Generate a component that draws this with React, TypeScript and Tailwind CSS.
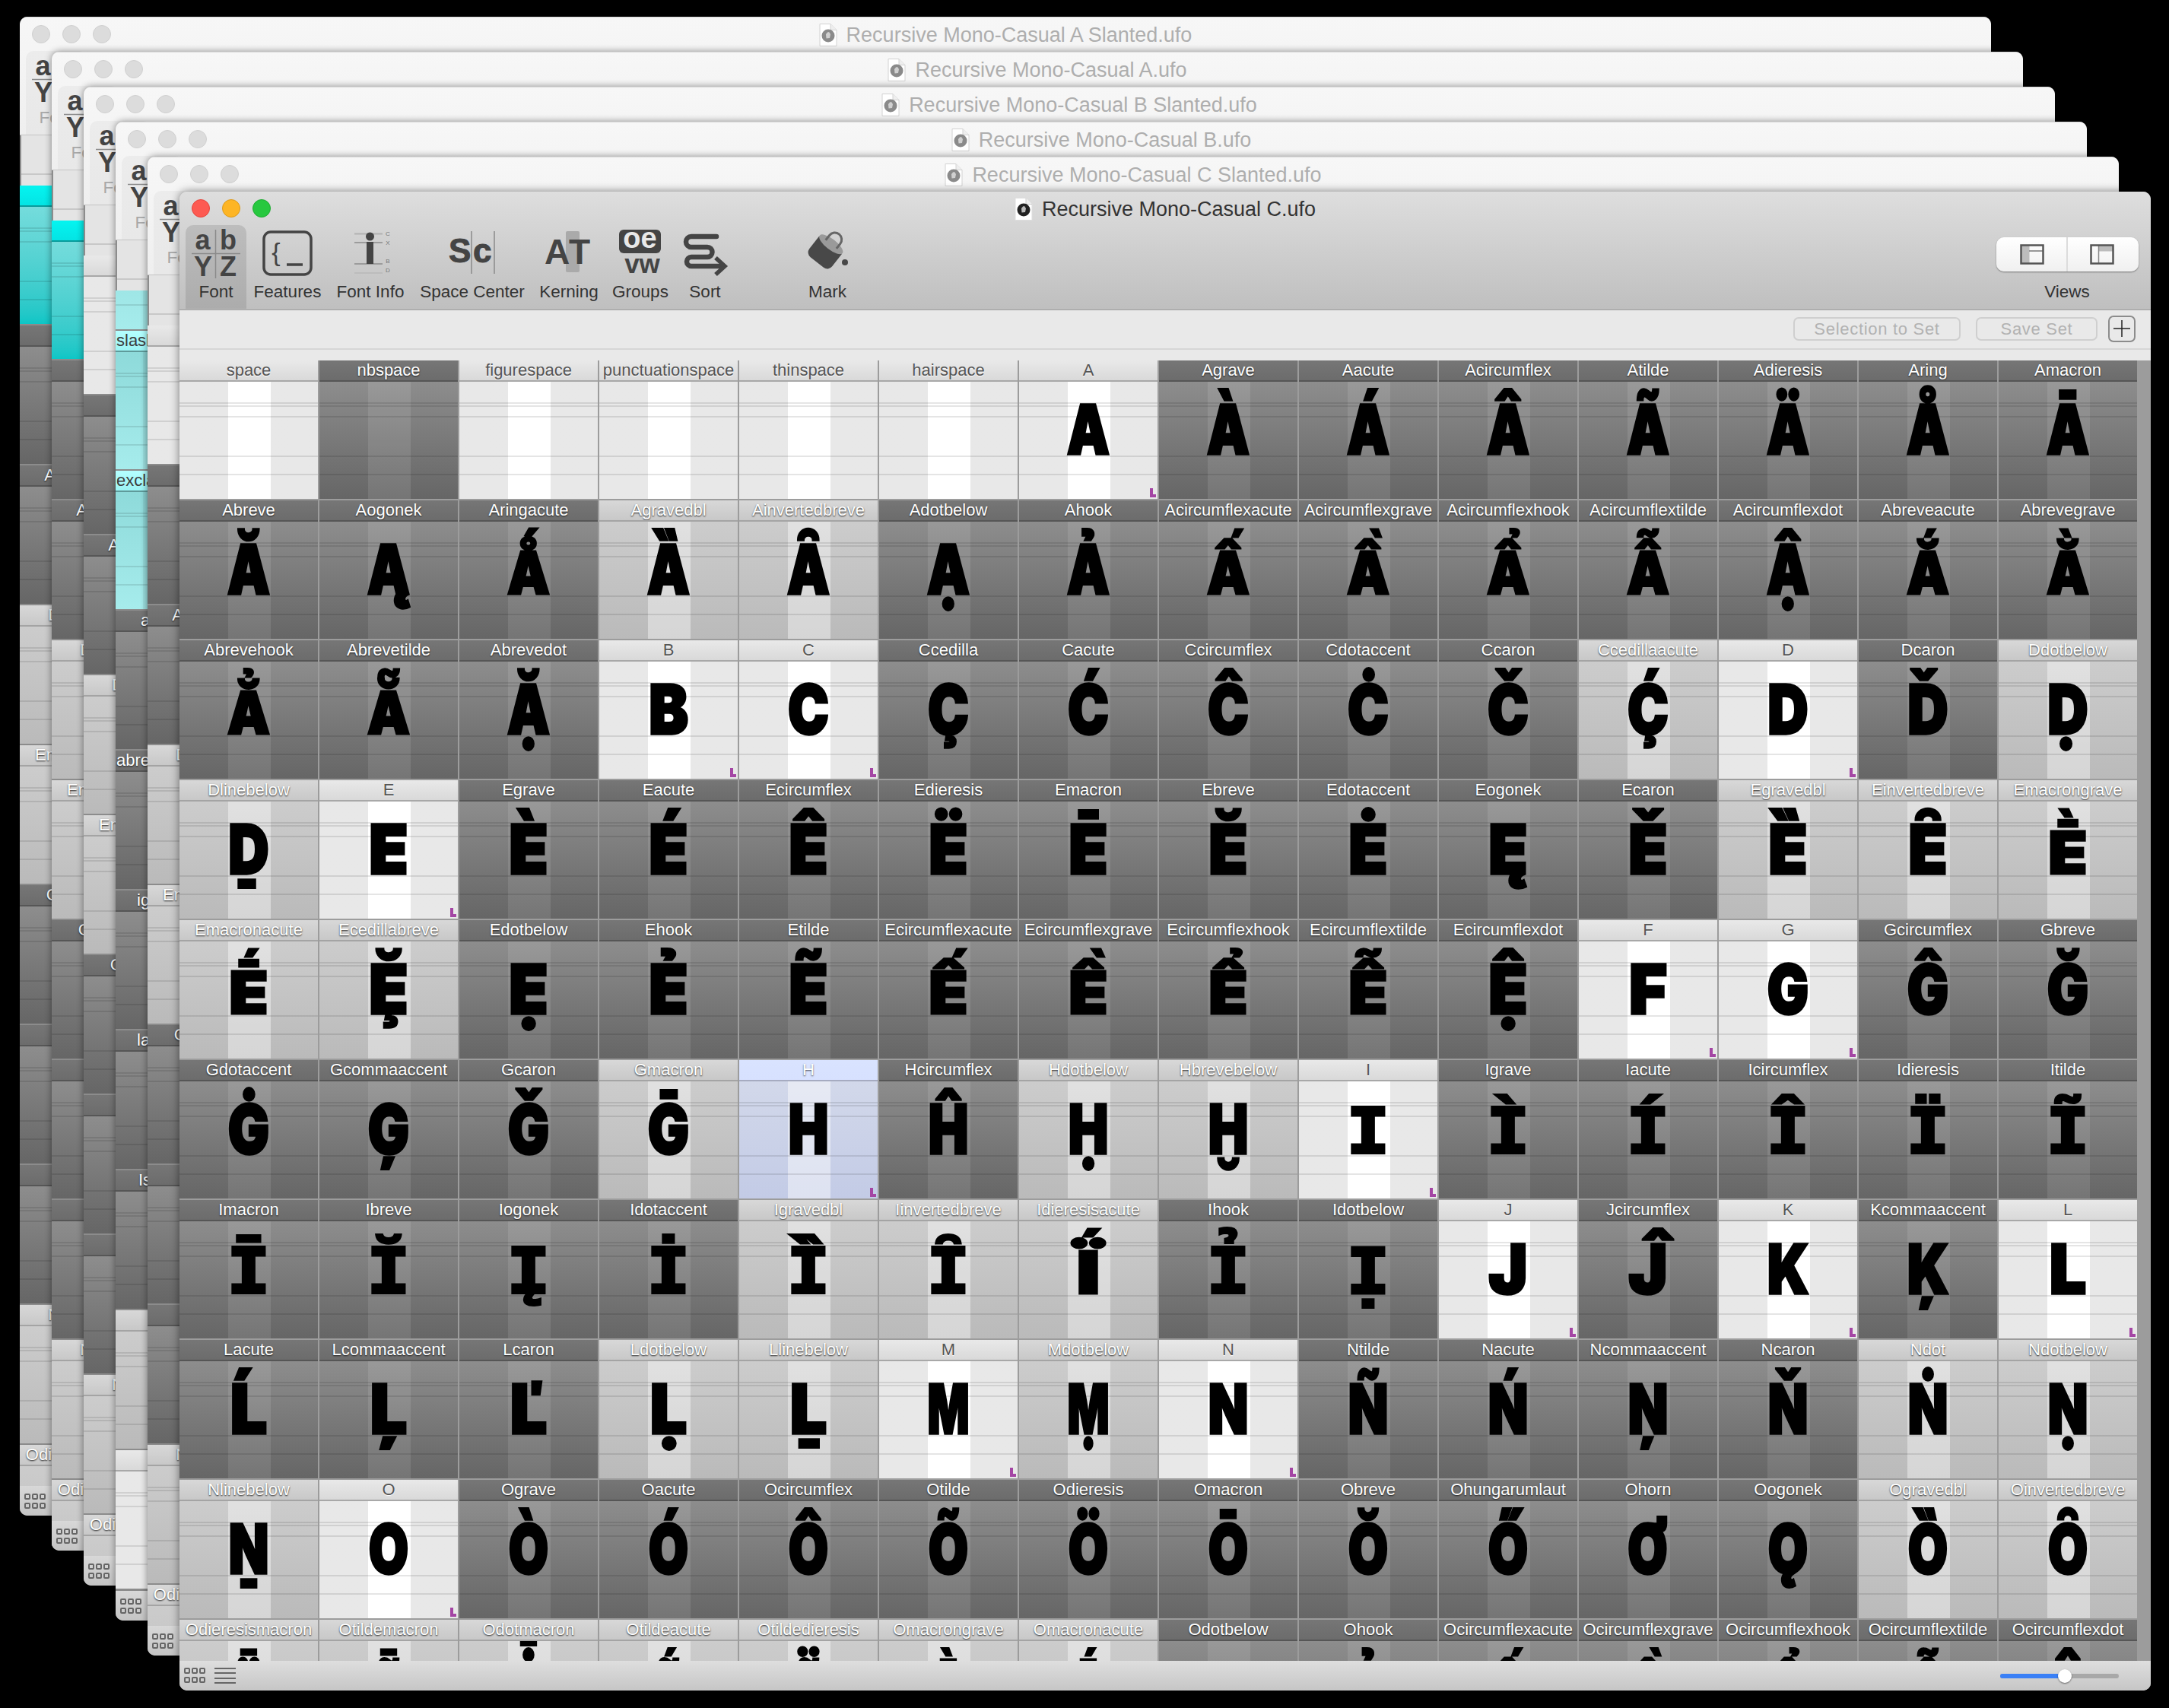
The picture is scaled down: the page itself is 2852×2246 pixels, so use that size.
import React from "react";

type Kind = "W" | "M" | "D" | "L" | "B" | "C" | "P";

type CellData = {
  name: string;
  glyph: string;
  kind: Kind;
  labelLeft?: number;
};

const KINDS: Record<Kind, { head: string; body: string; stripe: string }> = {
  W: {
    head: "from-[#e9e9e9] to-[#d9d9d9] border-[#a8a8a8] text-[#555] [text-shadow:0_1px_1px_#fff]",
    body: "from-[#e8e8e8] to-[#e8e8e8]",
    stripe: "left-[64px] bg-white",
  },
  M: {
    head: "from-[#e9e9e9] to-[#d9d9d9] border-[#a8a8a8] text-[#555] [text-shadow:0_1px_1px_#fff]",
    body: "from-[#e8e8e8] to-[#e8e8e8]",
    stripe: "left-[64px] bg-white",
  },
  D: {
    head: "from-[#767676] to-[#6c6c6c] border-[#565656] text-white [text-shadow:0_1px_2px_rgba(0,0,0,0.75)]",
    body: "from-[#8d8d8d] to-[#666666]",
    stripe: "left-[64px] bg-white/10",
  },
  L: {
    head: "from-[#d8d8d8] to-[#c8c8c8] border-[#a4a4a4] text-white [text-shadow:0_1px_2px_rgba(0,0,0,0.85)]",
    body: "from-[#cccccc] to-[#bababa]",
    stripe: "left-[64px] bg-white/40",
  },
  B: {
    head: "from-[#d9e3ff] to-[#d7e1ff] border-[#a6abc0] text-white [text-shadow:0_1px_2px_rgba(0,0,0,0.7)]",
    body: "from-[#d2d8ea] to-[#c3cbe6]",
    stripe: "left-[64px] bg-white/45",
  },
  C: {
    head: "from-[#05f4f0] to-[#04e4e4] border-[#0a9c9c] text-[#555]",
    body: "from-[#74dcdc] to-[#0cc6c6]",
    stripe: "left-[64px] bg-white/15",
  },
  P: {
    head: "from-[#b4ffff] to-[#9cf4f4] border-[#5f9a9a] text-[#3c3c3c]",
    body: "from-[#8edada] to-[#a6ecec]",
    stripe: "left-[36px] bg-black/5",
  },
};

const SHEET = [
  "space::W nbspace::D figurespace::W punctuationspace::W thinspace::W hairspace::W A:A:M Agrave:À:D Aacute:Á:D Acircumflex:Â:D Atilde:Ã:D Adieresis:Ä:D Aring:Å:D Amacron:Ā:D",
  "Abreve:Ă:D Aogonek:Ą:D Aringacute:Ǻ:D Agravedbl:Ȁ:L Ainvertedbreve:Ȃ:L Adotbelow:Ạ:D Ahook:Ả:D Acircumflexacute:Ấ:D Acircumflexgrave:Ầ:D Acircumflexhook:Ẩ:D Acircumflextilde:Ẫ:D Acircumflexdot:Ậ:D Abreveacute:Ắ:D Abrevegrave:Ằ:D",
  "Abrevehook:Ẳ:D Abrevetilde:Ẵ:D Abrevedot:Ặ:D B:B:M C:C:M Ccedilla:Ç:D Cacute:Ć:D Ccircumflex:Ĉ:D Cdotaccent:Ċ:D Ccaron:Č:D Ccedillaacute:Ḉ:L D:D:M Dcaron:Ď:D Ddotbelow:Ḍ:L",
  "Dlinebelow:Ḏ:L E:E:M Egrave:È:D Eacute:É:D Ecircumflex:Ê:D Edieresis:Ë:D Emacron:Ē:D Ebreve:Ĕ:D Edotaccent:Ė:D Eogonek:Ę:D Ecaron:Ě:D Egravedbl:Ȅ:L Einvertedbreve:Ȇ:L Emacrongrave:Ḕ:L",
  "Emacronacute:Ḗ:L Ecedillabreve:Ḝ:L Edotbelow:Ẹ:D Ehook:Ẻ:D Etilde:Ẽ:D Ecircumflexacute:Ế:D Ecircumflexgrave:Ề:D Ecircumflexhook:Ể:D Ecircumflextilde:Ễ:D Ecircumflexdot:Ệ:D F:F:M G:G:M Gcircumflex:Ĝ:D Gbreve:Ğ:D",
  "Gdotaccent:Ġ:D Gcommaaccent:Ģ:D Gcaron:Ǧ:D Gmacron:Ḡ:L H:H:B Hcircumflex:Ĥ:D Hdotbelow:Ḥ:L Hbrevebelow:Ḫ:L I:I:M Igrave:Ì:D Iacute:Í:D Icircumflex:Î:D Idieresis:Ï:D Itilde:Ĩ:D",
  "Imacron:Ī:D Ibreve:Ĭ:D Iogonek:Į:D Idotaccent:İ:D Igravedbl:Ȉ:L Iinvertedbreve:Ȋ:L Idieresisacute:Ḯ:L Ihook:Ỉ:D Idotbelow:Ị:D J:J:M Jcircumflex:Ĵ:D K:K:M Kcommaaccent:Ķ:D L:L:M",
  "Lacute:Ĺ:D Lcommaaccent:Ļ:D Lcaron:Ľ:D Ldotbelow:Ḷ:L Llinebelow:Ḻ:L M:M:M Mdotbelow:Ṃ:L N:N:M Ntilde:Ñ:D Nacute:Ń:D Ncommaaccent:Ņ:D Ncaron:Ň:D Ndot:Ṅ:L Ndotbelow:Ṇ:L",
  "Nlinebelow:Ṉ:L O:O:M Ograve:Ò:D Oacute:Ó:D Ocircumflex:Ô:D Otilde:Õ:D Odieresis:Ö:D Omacron:Ō:D Obreve:Ŏ:D Ohungarumlaut:Ő:D Ohorn:Ơ:D Oogonek:Ǫ:D Ogravedbl:Ȍ:L Oinvertedbreve:Ȏ:L",
  "Odieresismacron:Ȫ:L Otildemacron:Ȭ:L Odotmacron:Ȱ:L Otildeacute:Ṍ:L Otildedieresis:Ṏ:L Omacrongrave:Ṑ:L Omacronacute:Ṓ:L Odotbelow:Ọ:D Ohook:Ỏ:D Ocircumflexacute:Ố:D Ocircumflexgrave:Ồ:D Ocircumflexhook:Ổ:D Ocircumflextilde:Ỗ:D Ocircumflexdot:Ộ:D",
].map((row) =>
  row.split(" ").map((item): CellData => {
    const [name, glyph, kind] = item.split(":");
    return { name, glyph, kind: kind as Kind };
  })
);

// the font in the picture is monospaced, so squeeze each base letter to one width
const LETTER_WIDTH: Record<string, string> = {
  A: "scale-x-[0.78]",
  B: "scale-x-[0.86]",
  C: "scale-x-[0.8]",
  D: "scale-x-[0.82]",
  E: "scale-x-[0.93]",
  F: "scale-x-[0.95]",
  G: "scale-x-[0.8]",
  H: "scale-x-[0.78]",
  I: "scale-x-[1.2]",
  J: "scale-x-[0.95]",
  K: "scale-x-[0.8]",
  L: "scale-x-[0.95]",
  M: "scale-x-[0.64]",
  N: "scale-x-[0.76]",
  O: "scale-x-[0.75]",
};

// two accents on one letter need a shorter glyph to stay in the cell
const STACKED = "ǺẤẦẨẪẮẰẲẴḔḖẾỀỂỄḮȪȬṌṎṐṒỐỒỔỖ";
const SLAB_I = "IÌÍÎÏĨĪĬĮİȈȊỈỊ";

const glyphClass = (glyph: string) => {
  if (SLAB_I.includes(glyph)) {
    return "top-[11px] text-[82px] font-bold font-['DejaVu_Sans_Mono'] [-webkit-text-stroke:4px_#000] scale-x-[1.14]";
  }
  const base = LETTER_WIDTH[glyph.normalize("NFD")[0]] ?? "";
  const height = STACKED.includes(glyph) ? "scale-y-[0.86] origin-[50%_88px]" : "";
  return `top-[8px] text-[90px] font-black font-['Inter'] [-webkit-text-stroke:3.5px_#000] ${base} ${height}`;
};

const firstColumn = (first: Kind): CellData[] =>
  SHEET.map((row, idx) => ({
    name: row[0].name,
    glyph: "",
    kind: idx === 0 ? first : row[0].kind,
  }));

// this one is scrolled, so the rows start part way through a cell
const SCROLLED: CellData[] = [
  { name: "", glyph: "", kind: "P" },
  { name: "slashlongcomb", glyph: "", kind: "P", labelLeft: 1 },
  { name: "exclamdown", glyph: "", kind: "P", labelLeft: 1 },
  { name: "a", glyph: "", kind: "D", labelLeft: 33 },
  { name: "abreveacute", glyph: "", kind: "D", labelLeft: 1 },
  { name: "igrave", glyph: "", kind: "D", labelLeft: 28 },
  { name: "lacute", glyph: "", kind: "D", labelLeft: 28 },
  { name: "Istroke", glyph: "", kind: "D", labelLeft: 30 },
  { name: "", glyph: "", kind: "L" },
  { name: "", glyph: "", kind: "W" },
];

const BACK_WINDOWS = [
  { place: "left-[26px] top-[22px]", title: "Recursive Mono-Casual A Slanted.ufo", cells: firstColumn("C"), shift: "" },
  { place: "left-[68px] top-[68px]", title: "Recursive Mono-Casual A.ufo", cells: firstColumn("C"), shift: "" },
  { place: "left-[110px] top-[114px]", title: "Recursive Mono-Casual B Slanted.ufo", cells: firstColumn("W"), shift: "" },
  { place: "left-[152px] top-[160px]", title: "Recursive Mono-Casual B.ufo", cells: SCROLLED, shift: "-mt-[131px]" },
  { place: "left-[194px] top-[206px]", title: "Recursive Mono-Casual C Slanted.ufo", cells: firstColumn("W"), shift: "" },
];

const GUIDES = ["top-[27px]", "top-[31px]", "top-[45px]", "top-[97px]", "top-[121px]"];

const Cell: React.FC<{ cell: CellData }> = ({ cell }) => {
  const look = KINDS[cell.kind];
  return (
    <div className="w-[182px] h-[182px] flex flex-col">
      <div
        className={`h-[28px] border-b-2 bg-linear-to-b text-[22px] leading-[25px] whitespace-nowrap overflow-hidden ${look.head} ${
          cell.labelLeft === undefined ? "text-center" : "text-left"
        }`}
        style={cell.labelLeft === undefined ? undefined : { paddingLeft: cell.labelLeft }}
      >
        {cell.name}
      </div>
      <div className={`relative flex-1 overflow-hidden bg-linear-to-b ${look.body}`}>
        <div className={`absolute inset-y-0 w-[56px] ${look.stripe}`} />
        {GUIDES.map((g) => (
          <div key={g} className={`absolute inset-x-0 h-[2px] bg-black/10 ${g}`} />
        ))}
        {cell.glyph && (
          <div className={`absolute inset-x-0 text-center leading-[110px] text-black ${glyphClass(cell.glyph)}`}>
            {cell.glyph}
          </div>
        )}
        {(cell.kind === "M" || cell.kind === "B") && (
          <div className="absolute right-[2px] bottom-[2px] w-[8px] h-[12px] border-l-[4px] border-b-[4px] border-[#a445a4]" />
        )}
      </div>
    </div>
  );
};

const DocIcon: React.FC<{ active: boolean }> = ({ active }) => (
  <svg width="24" height="30" viewBox="0 0 24 30">
    <path d="M1 0.5H15L23 8.5V29.5H1Z" fill="#fff" stroke={active ? "#ddd" : "#d2d2d2"} />
    <path d="M15 0.5V8.5H23" fill="#eee" stroke={active ? "#ccc" : "#d2d2d2"} />
    <circle cx="12" cy="16" r="8.5" fill={active ? "#222" : "#8a8a8a"} />
    <path d="M9.5 19.5L9 14L11 11.5L13 11L15 14L14 19Z" fill={active ? "#bbb" : "#d0d0d0"} />
  </svg>
);

const FontIcon: React.FC = () => (
  <svg viewBox="244 296 80 76" className="w-[80px] h-[76px]">
    <g fill="#444" fontWeight="700" fontSize="36" fontFamily="Liberation Sans" textAnchor="middle">
      <text x="266.5" y="328">a</text>
      <text x="300" y="328">b</text>
      <text x="267" y="363">Y</text>
      <text x="300" y="363">Z</text>
    </g>
    <path d="M252 333.5H316M283.5 302V366" stroke="#8a8a8a" strokeWidth="1.5" />
  </svg>
);

const FeaturesIcon: React.FC = () => (
  <svg viewBox="324 296 108 76" className="w-[108px] h-[76px]">
    <rect x="347" y="305" width="62" height="56" rx="9" fill="none" stroke="#444" strokeWidth="3.5" />
    <text x="363" y="343" fill="#444" fontSize="34" fontFamily="Liberation Sans" textAnchor="middle">{"{"}</text>
    <path d="M377 348H398" stroke="#444" strokeWidth="3.5" />
  </svg>
);

const FontInfoIcon: React.FC = () => (
  <svg viewBox="432 296 110 76" className="w-[110px] h-[76px]">
    <path d="M466 307.5H503" stroke="#b2b2b2" strokeWidth="2" />
    <path d="M466 319H503M466 347H503" stroke="#9c9c9c" strokeWidth="2" />
    <path d="M466 359H503" stroke="#bcbcbc" strokeWidth="2" />
    <circle cx="486.5" cy="311" r="5.5" fill="#444" />
    <rect x="482" y="318" width="9" height="29" fill="#444" />
    <g fill="#777" fontSize="8" fontFamily="Liberation Sans" textAnchor="middle">
      <text x="510" y="310">C</text>
      <text x="510" y="322">X</text>
      <text x="510" y="346">B</text>
      <text x="510" y="358">D</text>
    </g>
  </svg>
);

const SpaceCenterIcon: React.FC = () => (
  <svg viewBox="542 296 158 76" className="w-[158px] h-[76px]">
    <g fill="#444" fontWeight="700" fontFamily="Liberation Sans" stroke="#444" strokeWidth="1">
      <text x="590" y="345" fontSize="44">S</text>
      <text x="622" y="345" fontSize="44">c</text>
    </g>
    <path d="M620 304V360M650 304V360" stroke="#8a8a8a" strokeWidth="1.5" />
  </svg>
);

const KerningIcon: React.FC = () => (
  <svg viewBox="700 296 96 76" className="w-[96px] h-[76px]">
    <rect x="744" y="304" width="18" height="54" rx="2" fill="#aaa" />
    <g fill="#444" fontWeight="700" fontFamily="Liberation Sans" fontSize="46">
      <text x="716" y="347">A</text>
      <text x="748" y="347">T</text>
    </g>
  </svg>
);

const GroupsIcon: React.FC = () => (
  <svg viewBox="796 296 92 76" className="w-[92px] h-[76px]">
    <rect x="814" y="302" width="55" height="31" rx="6" fill="#444" />
    <text x="841.5" y="326" fill="#e8e8e8" fontSize="38" fontWeight="700" fontFamily="Liberation Sans" textAnchor="middle">oe</text>
    <text x="844.5" y="359" fill="#444" fontSize="35" fontWeight="700" fontFamily="Liberation Sans" textAnchor="middle">vw</text>
  </svg>
);

const SortIcon: React.FC = () => (
  <svg viewBox="888 296 78 76" className="w-[78px] h-[76px]">
    <path
      d="M942 311H909a7 7 0 0 0 0 14H930a6.5 6.5 0 0 1 0 13H909a6 6 0 0 0 0 12H948"
      fill="none"
      stroke="#444"
      strokeWidth="6.5"
      strokeLinecap="round"
    />
    <path d="M941 339L953 350L941 361" fill="none" stroke="#444" strokeWidth="5.5" />
  </svg>
);

const MarkIcon: React.FC = () => (
  <svg viewBox="1048 296 80 76" className="w-[80px] h-[76px]">
    <g transform="rotate(38 1086 330)">
      <path d="M1067 320H1105V341a8 8 0 0 1-8 8H1075a8 8 0 0 1-8-8Z" fill="#484848" />
      <ellipse cx="1086" cy="319" rx="19" ry="7" fill="#9a9a9a" />
      <path d="M1077 319V311a9 9 0 0 1 18 0V319" fill="none" stroke="#666" strokeWidth="3" />
    </g>
    <circle cx="1111" cy="345" r="4" fill="#484848" />
  </svg>
);

const TOOLS: { label: string; width: string; icon: React.ReactNode }[] = [
  { label: "Features", width: "w-[108px]", icon: <FeaturesIcon /> },
  { label: "Font Info", width: "w-[110px]", icon: <FontInfoIcon /> },
  { label: "Space Center", width: "w-[158px]", icon: <SpaceCenterIcon /> },
  { label: "Kerning", width: "w-[96px]", icon: <KerningIcon /> },
  { label: "Groups", width: "w-[92px]", icon: <GroupsIcon /> },
  { label: "Sort", width: "w-[78px]", icon: <SortIcon /> },
];

const ToolLabel: React.FC<{ text: string; active: boolean }> = ({ text, active }) => (
  <div className={`h-[24px] text-[22.5px] leading-[24px] text-center whitespace-nowrap ${active ? "text-[#333]" : "text-[#a8a8a8]"}`}>
    {text}
  </div>
);

const FontTool: React.FC<{ active: boolean }> = ({ active }) => (
  <div className={`w-[80px] h-[110px] rounded-t-[10px] bg-linear-to-b ${active ? "from-[#bdbdbd] to-[#acacac]" : "from-[#ececec] to-[#e8e8e8]"}`}>
    <FontIcon />
    <ToolLabel text="Font" active={active} />
  </div>
);

const TitleBar: React.FC<{ title: string; active: boolean }> = ({ title, active }) => {
  const dots = active
    ? ["bg-[#fd5a52] border-[#e5443c]", "bg-[#fdb525] border-[#dd9a18]", "bg-[#27c83f] border-[#1eab31]"]
    : ["bg-[#dcdcdc] border-[#d0d0d0]", "bg-[#dcdcdc] border-[#d0d0d0]", "bg-[#dcdcdc] border-[#d0d0d0]"];
  return (
    <div className="h-[44px] pt-[10px] grid grid-cols-[1fr_auto_1fr]">
      <div className="flex gap-[16px] pl-[16px]">
        {dots.map((d, idx) => (
          <div key={idx} className={`w-[24px] h-[24px] rounded-full border ${d}`} />
        ))}
      </div>
      <div className={`flex items-center gap-[12px] h-[26px] text-[27px] whitespace-nowrap ${active ? "text-[#333]" : "text-[#aeaeae]"}`}>
        <DocIcon active={active} />
        <span>{title}</span>
      </div>
    </div>
  );
};

const SquaresIcon: React.FC = () => (
  <svg width="28" height="21" viewBox="0 0 28 21" fill="none" stroke="#666" strokeWidth="2">
    {[1, 11, 21].map((x) =>
      [1, 13].map((y) => <rect key={`${x}-${y}`} x={x} y={y} width="6" height="6" rx="1" />)
    )}
  </svg>
);

const BackWindow: React.FC<{ place: string; title: string; cells: CellData[]; shift: string }> = ({
  place,
  title,
  cells,
  shift,
}) => (
  <div className={`absolute ${place} w-[2592px] h-[1971px] rounded-[10px] overflow-hidden flex flex-col bg-[#e8e8e8] shadow-[0_0_10px_rgba(0,0,0,0.45)]`}>
    <div className="h-[156px] shrink-0 border-t border-b-[1.5px] border-t-[#d8d8d8] border-b-[#c4c4c4] bg-linear-to-b from-[#f7f7f7] to-[#efefef]">
      <TitleBar title={title} active={false} />
      <div className="pl-[8px]">
        <FontTool active={false} />
      </div>
    </div>
    <div className="h-[66px] shrink-0 pt-[50px] border-l-2 border-[#8c8c8c] bg-[#e4e4e4]">
      <div className="h-[2px] bg-[#c8c8c8]" />
    </div>
    <div className="flex-1 overflow-hidden bg-[#8c8c8c]">
      <div className={`flex flex-col gap-[2px] ${shift}`}>
        {cells.map((cell, idx) => (
          <Cell key={idx} cell={cell} />
        ))}
      </div>
    </div>
    <div className="h-[39px] shrink-0 pl-[6px] pt-[10px] bg-linear-to-b from-[#d8d8d8] to-[#c4c4c4]">
      <SquaresIcon />
    </div>
  </div>
);

const MainWindow: React.FC = () => (
  <div className="absolute left-[236px] top-[252px] w-[2592px] h-[1971px] rounded-[10px] overflow-hidden flex flex-col bg-[#e9e9e9] shadow-[0_0_12px_rgba(0,0,0,0.5)]">
    <div className="h-[156px] shrink-0 border-b-[1.5px] border-[#9c9c9c] bg-linear-to-b from-[#dedede] to-[#bfbfbf]">
      <TitleBar title="Recursive Mono-Casual C.ufo" active />
      <div className="flex pl-[8px] pr-[10px]">
        <FontTool active />
        {TOOLS.map((tool) => (
          <div key={tool.label} className={tool.width}>
            {tool.icon}
            <ToolLabel text={tool.label} active />
          </div>
        ))}
        <div className="w-[80px] ml-[82px]">
          <MarkIcon />
          <ToolLabel text="Mark" active />
        </div>
        <div className="ml-auto w-[200px] flex flex-col items-center">
          <div className="mt-[16px] mb-[15px] h-[45px] w-[187px] flex rounded-[10px] bg-linear-to-b from-white to-[#f0f0f0] shadow-[0_1px_2px_rgba(0,0,0,0.4)]">
            <div className="flex-1 flex items-center justify-center pl-[3px] border-r-2 border-[#dcdcdc]">
              <svg width="32" height="27" viewBox="0 0 32 27" fill="none">
                <rect x="1.5" y="1.5" width="11" height="24" fill="#bcbcbc" />
                <path d="M12 9H31" stroke="#777" strokeWidth="1.5" />
                <rect x="1.5" y="1.5" width="29" height="24" stroke="#555" strokeWidth="2.5" />
              </svg>
            </div>
            <div className="flex-1 flex items-center justify-center pr-[3px]">
              <svg width="32" height="27" viewBox="0 0 32 27" fill="none">
                <rect x="11" y="1.5" width="19" height="8" fill="#bcbcbc" />
                <path d="M11.5 2V26" stroke="#888" strokeWidth="1.5" />
                <rect x="1.5" y="1.5" width="29" height="24" stroke="#555" strokeWidth="2.5" />
              </svg>
            </div>
          </div>
          <ToolLabel text="Views" active />
        </div>
      </div>
    </div>
    <div className="h-[52px] shrink-0 flex items-center justify-end gap-[20px] pr-[20px] pb-[2px] border-b-2 border-[#d6d6d6] text-[22px] tracking-[0.7px] text-[#b2b2b2]">
      <div className="w-[220px] h-[31px] leading-[27px] text-center rounded-[7px] border-2 border-[#cfcfcf]">Selection to Set</div>
      <div className="w-[160px] h-[31px] leading-[27px] text-center rounded-[7px] border-2 border-[#cfcfcf] -mr-[6px]">Save Set</div>
      <div className="w-[36px] h-[35px] flex items-center justify-center rounded-[7px] border-2 border-[#8c8c8c]">
        <svg width="22" height="22" viewBox="0 0 22 22" stroke="#222" strokeWidth="1.5">
          <path d="M11 0V22M0 11H22" />
        </svg>
      </div>
    </div>
    <div className="h-[14px] shrink-0" />
    <div className="flex-1 overflow-hidden bg-[#9c9c9c]">
      <div className="grid grid-cols-[repeat(14,182px)] auto-rows-[182px] gap-[2px]">
        {SHEET.flat().map((cell) => (
          <Cell key={cell.name} cell={cell} />
        ))}
      </div>
    </div>
    <div className="h-[39px] shrink-0 flex items-center pl-[6px] pr-[42px] gap-[12px] bg-linear-to-b from-[#dedede] to-[#c6c6c6]">
      <SquaresIcon />
      <div className="w-[28px] h-[21px] flex flex-col justify-between">
        <div className="h-[2px] bg-[#666]" />
        <div className="h-[2px] bg-[#666]" />
        <div className="h-[2px] bg-[#666]" />
        <div className="h-[2px] bg-[#666]" />
      </div>
      <div className="relative ml-auto w-[156px] h-[6px] rounded-full bg-[#a8a8a8]">
        <div className="w-[80px] h-[6px] rounded-full bg-[#3a80f6]" />
        <div className="absolute left-[76px] -top-[6px] w-[18px] h-[18px] rounded-full bg-white shadow-[0_1px_2px_rgba(0,0,0,0.5)]" />
      </div>
    </div>
  </div>
);

export default function App() {
  return (
    <div className="relative w-[2852px] h-[2246px] overflow-hidden bg-black font-['Liberation_Sans',sans-serif]">
      {BACK_WINDOWS.map((win) => (
        <BackWindow key={win.title} {...win} />
      ))}
      <MainWindow />
    </div>
  );
}
